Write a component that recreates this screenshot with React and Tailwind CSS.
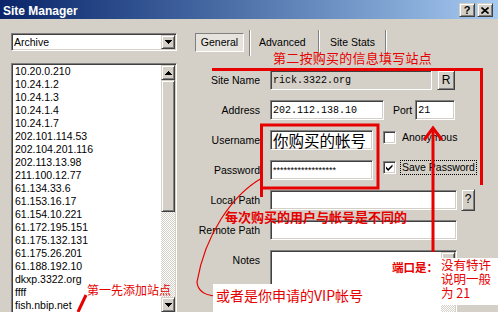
import React from "react";

const SUNKEN =
  "border border-t-[#808080] border-l-[#808080] border-b-white border-r-white shadow-[inset_1px_1px_0_#404040,inset_-1px_-1px_0_#d4d0c8]";
const RAISED =
  "border border-t-[#d4d0c8] border-l-[#d4d0c8] border-b-[#404040] border-r-[#404040] shadow-[inset_1px_1px_0_#ffffff,inset_-1px_-1px_0_#808080]";
const DITHER =
  "bg-[repeating-conic-gradient(#d4d0c8_0%_25%,#ffffff_0%_50%)] bg-[length:2px_2px]";

function Tri({ up }) {
  return (
    <svg width="7" height="4" viewBox="0 0 7 4" shapeRendering="crispEdges">
      {up ? (
        <g fill="#000">
          <rect x="3" y="0" width="1" height="1" />
          <rect x="2" y="1" width="3" height="1" />
          <rect x="1" y="2" width="5" height="1" />
          <rect x="0" y="3" width="7" height="1" />
        </g>
      ) : (
        <g fill="#000">
          <rect x="0" y="0" width="7" height="1" />
          <rect x="1" y="1" width="5" height="1" />
          <rect x="2" y="2" width="3" height="1" />
          <rect x="3" y="3" width="1" height="1" />
        </g>
      )}
    </svg>
  );
}

function Check() {
  return (
    <svg width="9" height="9" viewBox="0 0 9 9">
      <polygon points="1,3.5 3.2,5.7 7.5,1.4 7.5,3.6 3.2,7.9 1,5.7" fill="#000" />
    </svg>
  );
}

function Row({ label, children, start }) {
  return (
    <div className={`flex h-[20px] ${start ? "items-start" : "items-center"}`}>
      <div className={`w-[65px] shrink-0 text-right ${start ? "mt-[4px]" : ""}`}>{label}</div>
      <div className="ml-[10px] flex items-start">{children}</div>
    </div>
  );
}

const items = [
  "10.20.0.210",
  "10.24.1.2",
  "10.24.1.3",
  "10.24.1.4",
  "10.24.1.7",
  "202.101.114.53",
  "202.104.201.116",
  "202.113.13.98",
  "211.100.12.77",
  "61.134.33.6",
  "61.153.16.17",
  "61.154.10.221",
  "61.172.195.151",
  "61.175.132.131",
  "61.175.26.201",
  "61.188.192.10",
  "dkxp.3322.org",
  "ffff",
  "fish.nbip.net",
];

export default function App() {
  return (
    <div className="relative w-[498px] h-[312px] overflow-hidden bg-[#d4d0c8] font-['Liberation_Sans',Arial,sans-serif] text-[10.5px] leading-[13px] text-black">
      {/* Title bar */}
      <div className="h-[19px] flex items-start bg-gradient-to-r from-[#0a246a] to-[#a6caf0] pl-[3px] pr-[5px]">
        <span className="mt-[4px] text-[12px] leading-[14px] font-bold text-white">Site Manager</span>
        <div className="ml-auto mt-[3px] flex gap-[2px]">
          <div className={`w-[16px] h-[14px] bg-[#d4d0c8] ${RAISED} flex items-center justify-center text-[11px] font-bold leading-none`}>
            ?
          </div>
          <div className={`w-[16px] h-[14px] bg-[#d4d0c8] ${RAISED} flex items-center justify-center`}>
            <svg width="8" height="7" viewBox="0 0 8 7">
              <path d="M0.5 0.5 L7.5 6.5 M7.5 0.5 L0.5 6.5" stroke="#000" strokeWidth="1.6" />
            </svg>
          </div>
        </div>
      </div>

      {/* Body */}
      <div className="flex pl-[11px] pt-[14px]">
        {/* Left column */}
        <div className="w-[166px] shrink-0 flex flex-col">
          <div className={`h-[18px] bg-white ${SUNKEN} p-[1px] flex items-center`}>
            <span className="flex-1 pl-[1px]">Archive</span>
            <div className={`w-[14px] h-[14px] bg-[#d4d0c8] ${RAISED} flex items-center justify-center`}>
              <Tri />
            </div>
          </div>
          <div className={`mt-[12px] h-[251px] bg-white ${SUNKEN} p-[1px] flex`}>
            <div className="flex-1 pl-[2px] overflow-hidden">
              {items.map((i) => (
                <div key={i} className="h-[13px] leading-[13px] whitespace-nowrap">
                  {i}
                </div>
              ))}
            </div>
            <div className="w-[14px] flex flex-col">
              <div className={`h-[15px] bg-[#d4d0c8] ${RAISED} flex items-center justify-center`}>
                <Tri up />
              </div>
              <div className={`h-[132px] bg-[#d4d0c8] ${RAISED}`} />
              <div className={`flex-1 ${DITHER}`} />
              <div className={`h-[15px] bg-[#d4d0c8] ${RAISED} flex items-center justify-center`}>
                <Tri />
              </div>
            </div>
          </div>
        </div>

        {/* Right column */}
        <div className="ml-[18px] flex flex-col">
          {/* Tabs */}
          <div className="flex items-center h-[19px]">
            <div className="w-[49px] h-[19px] border border-t-[#808080] border-l-[#808080] border-b-white border-r-white bg-[#e6e3de] flex items-center justify-center">
              General
            </div>
            <div className="ml-[5px] w-[2px] h-[26px] border-l border-l-[#808080] border-r border-r-white" />
            <div className="w-[67px] pl-[8px]">Advanced</div>
            <div className="w-[2px] h-[26px] border-l border-l-[#808080] border-r border-r-white" />
            <div className="w-[65px] pl-[10px]">Site Stats</div>
            <div className="w-[2px] h-[26px] border-l border-l-[#808080] border-r border-r-white" />
          </div>

          {/* Form */}
          <div className="mt-[18px] flex flex-col gap-[10px]">
            <Row label="Site Name">
              <div className={`w-[162px] h-[20px] ${SUNKEN} p-[1px] pl-[2px] bg-[#d4d0c8] flex items-center font-['Liberation_Mono',monospace] text-[10px]`}>
                rick.3322.org
              </div>
              <div className={`ml-[5px] w-[18px] h-[20px] bg-[#d4d0c8] ${RAISED} flex items-center justify-center text-[12px]`}>
                R
              </div>
            </Row>
            <Row label="Address">
              <div className={`w-[114px] h-[20px] ${SUNKEN} p-[1px] pl-[2px] bg-white flex items-center font-['Liberation_Mono',monospace] text-[10px]`}>
                202.112.138.10
              </div>
              <div className="ml-[9px] h-[20px] flex items-center">Port</div>
              <div className={`ml-[3px] w-[40px] h-[20px] ${SUNKEN} p-[1px] pl-[2px] bg-white flex items-center font-['Liberation_Mono',monospace] text-[10px]`}>
                21
              </div>
            </Row>
            <Row label="Username">
              <div className={`w-[103px] h-[20px] ${SUNKEN} p-[1px] pl-[2px] bg-white flex items-center font-['Noto_Sans_CJK_SC',sans-serif] text-[15.5px] leading-[16px] whitespace-nowrap`}>
                你购买的帐号
              </div>
              <div className={`ml-[10px] mt-[1px] w-[13px] h-[13px] bg-white ${SUNKEN}`} />
              <div className="ml-[4px] h-[15px] border border-transparent px-[1px] leading-[13px]">Anonymous</div>
            </Row>
            <Row label="Password">
              <div className={`w-[103px] h-[20px] ${SUNKEN} p-[1px] pl-[2px] bg-white flex items-center text-[9px] leading-[10px] whitespace-nowrap overflow-hidden`}>
                ******************
              </div>
              <div className={`ml-[10px] mt-[1px] w-[13px] h-[13px] bg-white ${SUNKEN} p-[1px] flex items-center justify-center`}>
                <Check />
              </div>
              <div className="ml-[4px] h-[15px] border border-dotted border-black px-[1px] leading-[13px]">Save Password</div>
            </Row>
            <Row label="Local Path">
              <div className={`w-[187px] h-[20px] ${SUNKEN} bg-white`} />
              <div className={`ml-[4px] -mt-[1px] w-[14px] h-[22px] bg-[#d4d0c8] ${RAISED} flex items-center justify-center text-[12px]`}>
                ?
              </div>
            </Row>
            <Row label="Remote Path">
              <div className={`w-[187px] h-[20px] ${SUNKEN} bg-white`} />
            </Row>
            <Row label="Notes" start>
              <div className={`w-[187px] h-[80px] ${SUNKEN} p-[1px] bg-white flex justify-end`}>
                <div className="w-[14px] flex flex-col">
                  <div className={`h-[15px] bg-[#d4d0c8] ${RAISED} flex items-center justify-center`}>
                    <Tri up />
                  </div>
                  <div className={`flex-1 ${DITHER}`} />
                </div>
              </div>
            </Row>
          </div>
        </div>
      </div>

      {/* Annotations overlay */}
      <svg className="absolute inset-0 pointer-events-none" width="498" height="312" viewBox="0 0 498 312">
        <g stroke="#e60000" strokeWidth="3" fill="none">
          <path d="M212 69.5 H481.5 V185" />
          <path d="M261.5 197 V125 H378 V188 H261.5" />
          <path d="M433 252 V129" />
          <path d="M424 140 L433 128 L442 140" />
          <path d="M86 295 L78 312" />
        </g>
        <path d="M262 178 C 232 195, 205 235, 197 282 Q 198 294, 214 296" stroke="#e60000" strokeWidth="1.2" fill="none" />
      </svg>

      <div className="absolute left-[273px] top-[51px] font-['Noto_Sans_CJK_SC',sans-serif] text-[13px] leading-[13px] tracking-[0.25px] text-[#e60000] whitespace-nowrap">
        第二按购买的信息填写站点
      </div>
      <div className="absolute left-[225px] top-[210px] font-['Noto_Sans_CJK_SC',sans-serif] text-[13px] leading-[13px] font-bold text-[#e60000] whitespace-nowrap">
        每次购买的用户与帐号是不同的
      </div>
      <div className="absolute left-[87px] top-[284px] font-['Noto_Sans_CJK_SC',sans-serif] text-[12px] leading-[12px] text-[#e60000] whitespace-nowrap">
        第一先添加站点
      </div>
      <div className="absolute left-[213px] top-[284px] w-[158px] h-[30px] bg-white pl-[3px] pt-[4px] font-['Noto_Sans_CJK_SC',sans-serif] text-[14px] leading-[15px] text-[#e60000] whitespace-nowrap">
        或者是你申请的VIP帐号
      </div>
      <div className="absolute left-[440px] top-[258px] w-[58px] h-[47px] bg-white pl-[1px] font-['Noto_Sans_CJK_SC',sans-serif] text-[12.5px] leading-[14px] text-[#e60000] whitespace-nowrap">
        <div>没有特许</div>
        <div>说明一般</div>
        <div>为 21</div>
      </div>
      <div className="absolute left-[392px] top-[261px] font-['Noto_Sans_CJK_SC',sans-serif] text-[11.5px] leading-[12px] font-bold text-[#e60000] whitespace-nowrap">
        端口是：
      </div>
    </div>
  );
}
